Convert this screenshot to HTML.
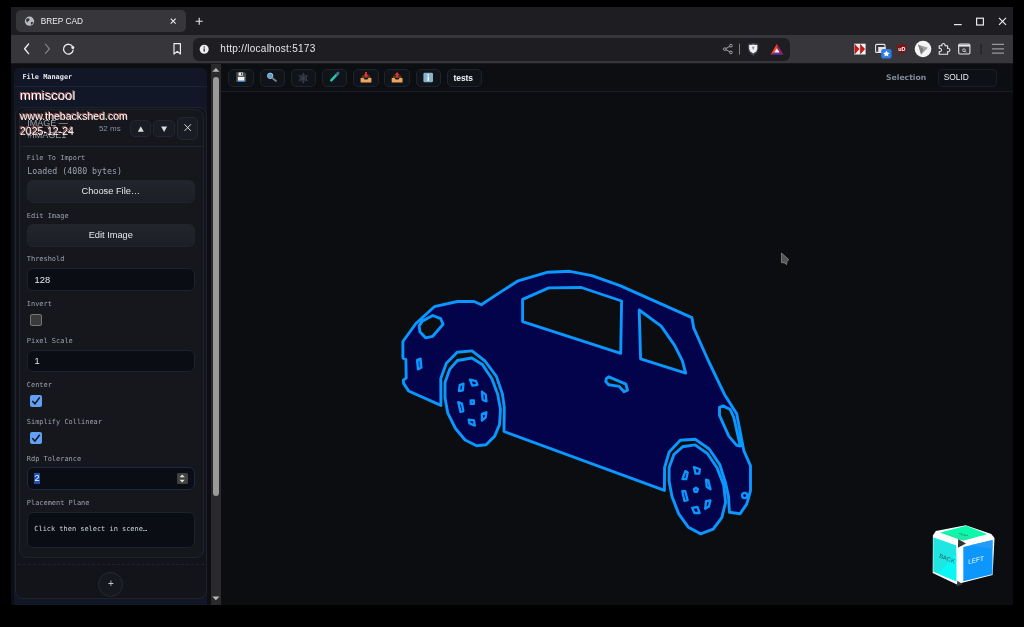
<!DOCTYPE html>
<html><head><meta charset="utf-8"><title>BREP CAD</title>
<style>
*{box-sizing:border-box;margin:0;padding:0}
html,body{width:1024px;height:627px;overflow:hidden;background:#000}
body{position:relative;font-family:"Liberation Sans","DejaVu Sans",sans-serif;color:#e5e7eb}
body div,body span,body svg{position:absolute}
#root{left:0;top:0;width:1024px;height:627px;will-change:transform}
.mono{font-family:"DejaVu Sans Mono","Liberation Mono",monospace}
.nw{white-space:nowrap}
/* browser chrome */
#win{left:11px;top:7px;width:1002px;height:598px;background:#0b0d10;overflow:hidden}
#tabbar{left:11px;top:7px;width:1002px;height:28px;background:#1e1e22}
#tab{left:15.5px;top:10px;width:170px;height:21.5px;background:#36363b;border-radius:5px}
#tabt{left:40.7px;top:15.7px;font-size:8.3px;line-height:10px;color:#ececee}
#nav{left:11px;top:35px;width:1002px;height:29px;background:#36363b;border-bottom:1.8px solid #18181b}
#url{left:193px;top:38px;width:597.2px;height:22.5px;background:#1e1e22;border-radius:6px}
#urlt{left:220.3px;top:43.2px;font-size:10px;line-height:12px;color:#e6e6e8;letter-spacing:.27px}
/* sidebar */
#side{left:11px;top:64px;width:200px;height:541px;background:#0c0e12}
#fm{left:14px;top:67.5px;width:193px;height:537.5px;background:#111726;border-radius:5px 5px 0 0}
#fmline{left:14px;top:86px;width:193px;height:1px;background:#1a2233}
#fmt{left:22.4px;top:73.2px;font-weight:bold;font-size:6.9px;line-height:8px;color:#e5e7eb}
#scroll{left:210.8px;top:64px;width:10.1px;height:541px;background:#2a2a2c}
#thumb{left:213px;top:76.7px;width:6.1px;height:419.8px;background:#9a9a9a;border-radius:3px}
/* history card */
#hc{left:15px;top:107.2px;width:192px;height:492.3px;background:#121419;border:1px solid #1d2330;border-radius:8px}
#hi{left:18.5px;top:108.5px;width:185.5px;height:449px;background:#15171c;border:1px solid #1d2330;border-radius:8px}
#hsep{left:19.5px;top:146px;width:183.5px;height:1px;background:#1d2330}
.lbl{left:26.8px;font-size:6.95px;line-height:8px;color:#9aa2b1}
.btn{left:26.8px;width:168px;height:23.2px;background:#1e2128;border:1px solid #20242c;border-radius:6px;text-align:center;font-size:9.25px;line-height:21.4px;color:#e5e7eb;background:linear-gradient(#22252c,#1b1e25)}
.inp{left:26.8px;width:168px;height:22.8px;background:#0a0d13;border:1px solid #1c2230;border-radius:6px}
.inp span{left:6.8px;top:5.4px;font-size:9.3px;line-height:10px;color:#e5e7eb}
.cb{left:29.9px;width:12.2px;height:12.2px;border-radius:2px}
.cb.off{background:#3a3a3a;border:1px solid #767676}
.cb.on{background:#62a0f5}
.hb{top:119.9px;width:21.3px;height:17.6px;background:#191c22;border:1px solid #222733;border-radius:5px}
/* main */
#main{left:220.9px;top:64px;width:792.1px;height:541px;background:#0b0d10}
#tb{left:220.9px;top:64px;width:792.1px;height:28.2px;background:#0c0e12;border-bottom:1px solid #181c24}
.tbtn{top:68.8px;width:25.4px;height:18px;border:1px solid #1c2431;background:#101318;border-radius:5px}
/* watermark */
.wm{left:20px;color:#fbfbfb;text-shadow:-1px -1.1px 0 #ad5a56;white-space:nowrap}
</style></head><body>
<div id="root">
<div id="win"></div>
<div id="tabbar"></div><div id="tab"></div><span id="tabt" class="nw">BREP CAD</span>
<div id="nav"></div><div id="url"></div><span id="urlt" class="nw">http://localhost:5173</span>
<svg style="left:11px;top:7px" width="1002" height="57" viewBox="11 7 1002 57">
<!-- globe -->
<circle cx="29.5" cy="21.2" r="4.6" fill="#b9bcc2"/><path d="M26 19.4 q1.6 -1.8 3.4 -.6 q.8 1.4 -.6 2.2 q-1.6 .2 -1.2 1.8 q-1.4 -.4 -1.6 -3.4z M31 22 q1.2 -.6 2.2 .2 q-.4 1.8 -2 2.6 q-.8 -1.4 -.2 -2.8z" fill="#36363b"/>
<!-- tab close / new tab -->
<path d="M170.7 18.7 L175.7 23.7 M175.7 18.7 L170.7 23.7" stroke="#e8e8ea" stroke-width="1.1"/>
<path d="M195.7 21.2 H202.7 M199.2 17.7 V24.7" stroke="#e8e8ea" stroke-width="1.1"/>
<!-- window controls -->
<path d="M954 24.6 H961.7" stroke="#e8e8ea" stroke-width="1.2"/>
<rect x="976.6" y="18.2" width="6.8" height="6.8" fill="none" stroke="#e8e8ea" stroke-width="1.2"/>
<path d="M999 17.8 L1006 24.8 M1006 17.8 L999 24.8" stroke="#e8e8ea" stroke-width="1.2"/>
<!-- nav -->
<path d="M28.6 44 L24.6 48.8 L28.6 53.6" fill="none" stroke="#ececee" stroke-width="1.4" stroke-linecap="round" stroke-linejoin="round"/>
<path d="M45.4 44.2 L49.4 48.8 L45.4 53.4" fill="none" stroke="#85858a" stroke-width="1.2" stroke-linecap="round" stroke-linejoin="round"/>
<path d="M72.6 46.6 A4.9 4.9 0 1 0 73.2 50.2" fill="none" stroke="#ececee" stroke-width="1.3" stroke-linecap="round"/><circle cx="72.8" cy="47.6" r="1.5" fill="#ececee"/>
<path d="M174 43.6 H180.4 V54 L177.2 51.4 L174 54 Z" fill="none" stroke="#ececee" stroke-width="1.2" stroke-linejoin="round"/>
<circle cx="204.2" cy="49.2" r="4.5" fill="#ececee"/><rect x="203.6" y="48.4" width="1.2" height="3.2" fill="#1e1e22"/><rect x="203.6" y="46.4" width="1.2" height="1.2" fill="#1e1e22"/>
<!-- share -->
<g stroke="#c2c2c6" stroke-width="0.8" fill="#1e1e22"><path d="M730.9 45.8 L724.8 49.1 L730.9 52.3" fill="none"/><circle cx="730.9" cy="45.7" r="1.35"/><circle cx="724.8" cy="49.1" r="1.35"/><circle cx="730.9" cy="52.4" r="1.35"/></g>
<path d="M739.5 43.6 V54.7" stroke="#96969b" stroke-width="0.8"/>
<!-- brave shield -->
<path d="M753.2 43.1 l2.8 .5 l1.4 -.3 l1.3 1.7 l-.4 1.3 l.3 1.5 l-1.2 4.4 l-4.2 3.7 l-4.2 -3.7 l-1.2 -4.4 l.3 -1.5 l-.4 -1.3 l1.3 -1.7 l1.4 .3 z" fill="#3c3f4d"/><path d="M753.2 44.4 l2.2 .5 l1.4 -.2 l.8 1.2 l-.5 1.2 l.3 1.1 l-1 3 l-3.2 2.3 l-3.2 -2.3 l-1 -3 l.3 -1.1 l-.5 -1.2 l.8 -1.2 l1.4 .2 z" fill="#f1f1f4"/><path d="M753.2 46.6 l1.3 .5 l-.5 1.5 l-.8 1.5 l-.8 -1.5 l-.5 -1.5 z" fill="#8d90a0"/>
<!-- BAT -->
<path d="M776.9 43.8 L783.6 54.8 L776.9 51.2 Z" fill="#9e1f63"/><path d="M776.9 43.8 L770.6 54.8 L776.9 51.2 Z" fill="#ff4a1f"/><path d="M770.6 54.8 L776.9 51.2 L783.6 54.8 Z" fill="#6a2f96"/><path d="M776.9 48.2 L779.6 52.6 H774.3 Z" fill="#fff"/>
<!-- ext 1 -->
<rect x="854" y="43.7" width="11.6" height="10.8" fill="#f4f4f4"/><path d="M854.7 44.3 L859.2 49.1 L854.7 53.9 Z M860.3 44.3 L864.8 49.1 L860.3 53.9 Z" fill="#e01010" stroke="#4a0a0a" stroke-width="0.4"/>
<!-- ext 2 -->
<rect x="875.6" y="44.4" width="9.4" height="8" rx="1" fill="none" stroke="#e4e4e6" stroke-width="1.1"/><rect x="878.2" y="47" width="7.4" height="5.6" fill="#e4e4e6"/><rect x="881.2" y="49" width="10.4" height="9.6" rx="2.2" fill="#2e7be6"/><path d="M886.4 50.6 l1 2 l2.2 .3 l-1.6 1.5 l.4 2.2 l-2 -1.1 l-2 1.1 l.4 -2.2 l-1.6 -1.5 l2.2 -.3 z" fill="#fff"/>
<!-- ublock -->
<path d="M901.8 43.8 q2.6 1.3 5.2 1.3 q.3 6.2 -5.2 9.4 q-5.5 -3.2 -5.2 -9.4 q2.6 0 5.2 -1.3z" fill="#7d1418"/><text x="901.8" y="50.9" font-size="5.4" font-weight="bold" fill="#fff" text-anchor="middle" font-family="Liberation Sans, sans-serif">uD</text>
<!-- circle play -->
<circle cx="923" cy="49" r="8.3" fill="#f5f5f5"/><path d="M918 44.5 L928 47.8 L921.2 54.6 Z" fill="#a2a2a2"/><path d="M918 44.5 L923.4 49.3 L921.2 54.6 Z" fill="#7c7c7c"/>
<!-- puzzle -->
<path d="M939.2 45.8 h2.6 a1.7 1.7 0 1 1 3.2 0 h2.6 v2.6 a1.7 1.7 0 1 1 0 3.2 v2.6 h-8.4 v-2.6 a1.7 1.7 0 1 0 0 -3.2 z" fill="none" stroke="#e6e6e8" stroke-width="1.1" stroke-linejoin="round"/>
<!-- window search -->
<rect x="958.7" y="44" width="11.2" height="10" rx="1.2" fill="none" stroke="#e6e6e8" stroke-width="1.1"/><path d="M958.7 45.6 H969.9" stroke="#e6e6e8" stroke-width="2"/><circle cx="964" cy="50.2" r="1.4" fill="none" stroke="#e6e6e8" stroke-width="0.8"/><path d="M965 51.2 L966.4 52.6" stroke="#e6e6e8" stroke-width="0.8"/>
<path d="M981.1 44 V54.6" stroke="#1d1d21" stroke-width="1"/>
<path d="M991.9 44.4 H1004 M991.9 48.8 H1004 M991.9 53.2 H1004" stroke="#98989c" stroke-width="1.3"/>
</svg>

<div id="side"></div>
<div id="fm"></div><div id="fmline"></div><span id="fmt" class="mono nw">File Manager</span>
<div id="scroll"></div><div id="thumb"></div>
<svg style="left:210px;top:64px" width="12" height="541" viewBox="210 64 12 541"><path d="M212.3 71.8 L215.9 67.9 L219.5 71.8 Z" fill="#b8b8b8"/><path d="M212.3 596.4 L215.9 600.3 L219.5 596.4 Z" fill="#b8b8b8"/></svg>

<div id="hc"></div><div id="hi"></div><div id="hsep"></div>
<span class="nw" style="left:27.2px;top:118px;font-size:9px;line-height:10px;color:#a0a5ae">IMAGE —</span>
<span class="nw" style="left:27.2px;top:129.5px;font-size:9px;line-height:10px;color:#989da7">#IMAGE1</span>
<span class="nw" style="left:98.9px;top:124px;font-size:8px;line-height:9px;color:#8790a0">52 ms</span>
<div class="hb" style="left:130.2px"></div><div class="hb" style="left:153.4px"></div>
<div class="hb" style="left:177.2px;top:116.9px;height:23px"></div>
<svg style="left:130px;top:117px" width="70" height="24" viewBox="130 117 70 24"><path d="M137.8 131.8 L140.8 126.2 L143.8 131.8Z M161.1 126.4 L164.1 132 L167.1 126.4Z" fill="#dcdcdc"/><path d="M184.5 124.3 L190.9 130.9 M190.9 124.3 L184.5 130.9" stroke="#dedede" stroke-width="1" fill="none"/></svg>
<span class="lbl mono nw" style="top:153.8px">File To Import</span>
<span class="mono nw" style="left:27.2px;top:166px;font-size:8.3px;line-height:10px;color:#9aa2b1">Loaded (4080 bytes)</span>
<div class="btn" style="top:180.2px">Choose File…</div>
<span class="lbl mono nw" style="top:211.8px">Edit Image</span>
<div class="btn" style="top:223.8px">Edit Image</div>
<span class="lbl mono nw" style="top:255px">Threshold</span>
<div class="inp" style="top:268.3px"><span>128</span></div>
<span class="lbl mono nw" style="top:299.6px">Invert</span>
<div class="cb off" style="top:313.7px"></div>
<span class="lbl mono nw" style="top:336.9px">Pixel Scale</span>
<div class="inp" style="top:349.5px"><span>1</span></div>
<span class="lbl mono nw" style="top:380.8px">Center</span>
<div class="cb on" style="top:394.6px"></div>
<span class="lbl mono nw" style="top:417.5px">Simplify Collinear</span>
<div class="cb on" style="top:431.9px"></div>
<svg style="left:29px;top:393px" width="14" height="53" viewBox="29 393 14 53"><path d="M32.3 401 L34.9 403.8 L39.8 397.4 M32.3 438.3 L34.9 441.1 L39.8 434.7" stroke="#101318" stroke-width="1.5" fill="none"/></svg>
<span class="lbl mono nw" style="top:455.3px">Rdp Tolerance</span>
<div class="inp" style="top:467.4px;border-color:#1b2a44"></div>
<div style="left:34.3px;top:472.8px;width:5.8px;height:11.4px;background:#1f4fb8"></div>
<span class="nw" style="left:34.6px;top:473.4px;font-size:9.3px;line-height:10px;color:#fff">2</span>
<div style="left:176.9px;top:472.8px;width:10.7px;height:11.4px;background:#414141;border-radius:1.5px"></div>
<svg style="left:176px;top:472px" width="13" height="13" viewBox="176 472 13 13"><path d="M179.6 477.3 L182.2 474.6 L184.8 477.3Z M179.6 479.8 L182.2 482.5 L184.8 479.8Z" fill="#e0e0e0"/></svg>
<span class="lbl mono nw" style="top:498.8px">Placement Plane</span>
<div class="inp" style="top:511.6px;height:36.8px"></div>
<span class="mono nw" style="left:34.3px;top:525px;font-size:6.95px;line-height:8px;color:#cfd5df">Click then select in scene…</span>
<div style="left:18px;top:563.5px;width:186px;height:0;border-top:1px dashed #1e232d"></div>
<div style="left:98.4px;top:572px;width:25px;height:25px;border-radius:50%;background:#15181e;border:1px solid #252a35"></div>
<span class="nw" style="left:107.4px;top:579.2px;font-size:10px;line-height:10px;color:#c4c8d0;width:7px;text-align:center">+</span>

<div id="main"></div><div id="tb"></div>
<div class="tbtn" style="left:228.4px"></div><div class="tbtn" style="left:259.5px"></div><div class="tbtn" style="left:290.5px"></div><div class="tbtn" style="left:321.8px"></div><div class="tbtn" style="left:353.2px"></div><div class="tbtn" style="left:384.3px"></div><div class="tbtn" style="left:415.5px"></div>
<div class="tbtn" style="left:447px;width:34.8px"></div>
<span class="nw" style="left:453.6px;top:72.6px;font-size:8.5px;line-height:10px;color:#f0f2f5;font-weight:bold;letter-spacing:-.1px">tests</span>
<svg style="left:228px;top:68px" width="216" height="20" viewBox="228 68 216 20">
<!-- floppy -->
<path d="M236.2 72.3 H244.6 L246.1 73.8 V81.9 H236.2 Z" fill="#4c4c4e"/><rect x="238.6" y="72.4" width="4.2" height="3.3" fill="#eef0f3"/><rect x="241" y="72.8" width="1.1" height="2.4" fill="#4c4c4e"/><rect x="237.9" y="76.9" width="6.5" height="3.9" fill="#f2f4f7"/><rect x="237.9" y="80.7" width="6.5" height="1.2" fill="#2f86d8"/>
<!-- magnifier -->
<circle cx="270.2" cy="75.8" r="2.7" fill="#5a9fd0" stroke="#a9c4d8" stroke-width="1"/><path d="M272.6 78.2 L276 81" stroke="#7a8088" stroke-width="1.8" stroke-linecap="round"/>
<!-- web -->
<g stroke="#454b57" stroke-width="0.7" fill="none"><path d="M303.3 72.6 V83.6 M298.5 75.3 L308.1 80.9 M298.5 80.9 L308.1 75.3"/><path d="M303.3 74.3 L306.5 76.2 V80 L303.3 81.9 L300.1 80 V76.2 Z M303.3 76.2 L304.9 77.1 V79 L303.3 80 L301.7 79 V77.1 Z"/></g>
<!-- test tube -->
<path d="M337.6 73.6 L331.3 80.4" stroke="#1cc9b3" stroke-width="2.4" stroke-linecap="round"/><path d="M338.2 73 L336.9 74.4" stroke="#3f6f92" stroke-width="2.6" stroke-linecap="round"/>
<!-- inbox down -->
<path d="M360.6 78 h3 l1 1.6 h2.8 l1 -1.6 h3 v4.4 h-10.8 Z" fill="#eba55c"/><path d="M361.2 78 L362.4 75.4 H369.6 L370.8 78" fill="#5e3c24"/><path d="M365 72 h2 v2.4 h1.6 l-2.6 3 l-2.6 -3 h1.6 Z" fill="#e23030"/>
<!-- outbox up -->
<path d="M391.7 78 h3 l1 1.6 h2.8 l1 -1.6 h3 v4.4 h-10.8 Z" fill="#eba55c"/><path d="M392.3 78 L393.5 75.4 H400.7 L401.9 78" fill="#5e3c24"/><path d="M396.1 77.6 h2 v-2.6 h1.6 l-2.6 -3 l-2.6 3 h1.6 Z" fill="#e23030"/>
<!-- info -->
<rect x="423.4" y="72.7" width="9.6" height="9.6" rx="1.4" fill="#86b3cd"/><rect x="427.5" y="76.6" width="1.5" height="4.2" fill="#fff"/><rect x="427.5" y="74.2" width="1.5" height="1.5" fill="#fff"/>
</svg>
<span class="nw" style="left:886px;top:72.8px;font-size:7.7px;line-height:10px;color:#828b9a;font-weight:bold;font-family:'DejaVu Sans','Liberation Sans',sans-serif;letter-spacing:0px">Selection</span>
<div style="left:938px;top:69px;width:58.5px;height:17.7px;background:#0d1015;border:1px solid #1a1f28;border-radius:4px"></div>
<span class="nw" style="left:943.7px;top:72.4px;font-size:8.4px;line-height:10px;color:#e8ebef">SOLID</span>

<svg style="left:0;top:0" width="1024" height="627" viewBox="0 0 1024 627">
<g fill="#03034b" stroke="#0a97ff" stroke-width="2.9" stroke-linejoin="round" fill-rule="evenodd">
<!-- body with holes -->
<path d="M403.6 383.4 L408.6 391 L440.9 405.4 L440.8 378.6 L446.4 363.2 L457.2 352.2 L472 350.9 L485 361 L496.4 376.4 L502.4 394 L504.3 407.4 L504 431.5 L664.4 490.4 L664.6 467.5 L669.2 452 L680.2 440.2 L695.2 439.2 L709.2 449 L719.8 464.6 L725.6 483.2 L728.5 496.6 L729.4 512.2 L740 513.8 L746.7 504.2 L750.5 490.8 L750.5 465.9 L743.8 450.6 L739 425.7 L736.7 413.8 L724.5 394.4 L708 360 L693.8 328.2 L691.9 317.6 L620 285.6 L591.9 275.7 L569.9 271.3 L547.8 272.2 L518.2 280.8 L500 292.4 L481.3 304.7 L474.2 301.5 L457.4 301.5 L434.3 306.7 L415.9 323.5 L402.9 341.5 L402.9 358 L405.9 359.6 L406.2 378.1 L403.3 380.2 Z
M522.6 299.4 L548.8 287.9 L581.3 287.5 L621.6 301 L620.7 353.4 L522.6 321.6 Z
M639.2 310 L661.2 326.2 L674.6 345.4 L682.3 360.7 L685.7 373.1 L640.6 358.8 Z
M606.4 378.7 L608.7 376.8 L625.9 384.1 L627.5 390.2 L624 391.7 L619.2 386.4 L608.7 384.8 L605.8 381.6 Z
M422.3 321.1 L432.7 315.5 L440.7 318.7 L443.1 324.3 L432.7 336.3 L425.5 337.8 L419.9 331.8 L419.1 325.9 Z
M719.5 407.4 L723.1 405.9 L730.2 409.5 L733.8 417.4 L740.3 446.1 L736.7 445.4 L728.8 436.1 L719.5 415.3 Z"/>
<!-- wheels -->
<path d="M457.4 360.5 L471.8 358 L482.3 364.4 L491.9 378.7 L497.6 394 L500.5 409.3 L499.5 424.6 L494.7 436.1 L486.1 444.7 L476.6 445.7 L465.1 440 L455.5 428.5 L447.8 413.2 L445 397.8 L445 382.5 L449.8 369.1 Z"/>
<path d="M669.1 467.8 L673.9 454.5 L682.5 446.8 L695 444.9 L707.4 453.5 L717 467.8 L723.7 485.1 L725.6 502.3 L721.8 517.6 L713.2 529.1 L700.7 533.9 L688.3 527.2 L678.7 513.8 L672 496.6 L669.1 481.2 Z"/>
</g>
<g fill="#03034b" stroke="#0a97ff" stroke-width="2.3" stroke-linejoin="round">
<path d="M417 360 L420.6 358.6 L421.4 367.6 L418 369.4 Z" fill="#0a49a8"/>
<circle cx="744.7" cy="495.6" r="2.6"/>
<!-- front hub -->
<path d="M470.0 379.6 L476.0 381.1 L477.5 384.8 L472.3 385.6 Z"/>
<path d="M459.7 385.1 L463.5 383.6 L462.8 390.3 L459.0 391.1 Z"/>
<path d="M481.9 391.7 L485.7 394.6 L486.5 401.3 L482.7 399.9 Z"/>
<path d="M458.2 402.1 L461.9 403.6 L463.4 411.1 L460.5 411.9 Z"/>
<path d="M481.9 413.8 L486.4 412.3 L485.6 417.5 L481.9 420.5 Z"/>
<path d="M468.7 419.6 L474.0 420.4 L474.8 425.6 L469.5 423.4 Z"/>
<path d="M470.7 400.5 L473.9 400.5 L473.9 403.9 L470.7 403.9 Z"/>
<!-- rear hub -->
<path d="M694.0 467.0 L699.9 469.3 L699.2 473.7 L695.5 473.7 Z"/>
<path d="M685.4 471.1 L687.7 472.5 L686.2 479.2 L682.4 479.2 Z"/>
<path d="M706.0 479.7 L708.3 480.4 L710.5 489.3 L706.8 487.1 Z"/>
<path d="M682.3 491.2 L685.3 491.2 L687.6 500.1 L684.5 500.9 Z"/>
<path d="M706.0 501.2 L710.4 500.5 L708.9 506.5 L705.2 508.7 Z"/>
<path d="M692.2 507.8 L697.4 507.0 L699.6 513.0 L694.4 513.0 Z"/>
<path d="M695.9 487.8 L697.9 489.2 L697.1 491.8 L694.7 491.8 L693.9 489.2 Z"/>
</g>
<!-- cursor -->
<path d="M781.5 253 L788.9 259.7 L787 261.3 L786.6 264.5 L784.4 262.9 L781.4 262.6 Z" fill="#555" stroke="#a8a8a8" stroke-width="0.6"/>
</svg>

<svg style="left:925px;top:515px" width="80" height="80" viewBox="925 515 80 80">
<path d="M935.8 531 L965.8 525.2 L991.3 534.1 L994.5 538 L992.6 575 L963.3 582.6 L956.9 584.5 L932.7 573.1 L932.9 535.4 Z" fill="#fff"/>
<path d="M940.3 532.4 L966.2 525.8 L987.3 534.3 L963.4 540.5 L958.2 539 Z" fill="#0cf9ab"/><path d="M940.3 532.4 L958.2 539 L963.4 540.5 L975 537.4 Z" fill="#22e6a4" opacity=".8"/>
<path d="M933.3 537.3 L956.3 545.6 L956.3 581.3 L933.3 571.8 Z" fill="#1fe6e2"/>
<path d="M956.3 553 L956.3 581.3 L938 573.8 Z" fill="#06fbfb" opacity=".8"/>
<path d="M963.3 546.9 L992.6 539.9 L992.4 574.3 L963.3 581.3 Z" fill="#0d97fd"/>
<path d="M970 545.3 L992.6 539.9 L992.5 549 Z" fill="#2a9cf2" opacity=".8"/>
<path d="M958.2 539 L966 543.6 L957.9 547.8 Z" fill="#343434"/>
<path d="M957.1 580.8 L962.6 584 L957.1 586.4 Z" fill="#3a3a3a"/>
<text transform="matrix(0.92 0.38 0 1 939.2 557.4)" font-size="6.2" fill="#2a5c5e" font-family="Liberation Sans, sans-serif" font-style="italic">BACK</text>
<text transform="matrix(0.97 -0.24 0 1 968.2 564.3)" font-size="6.6" fill="#f4f8ff" font-family="Liberation Sans, sans-serif">LEFT</text>
<text transform="matrix(0.92 0.3 -0.75 0.28 957.6 533.6)" font-size="4.6" font-weight="bold" fill="#2f6a58" font-family="Liberation Sans, sans-serif">TOP</text>
</svg>

<span class="wm" style="top:88px;font-size:13.1px;line-height:15px">mmiscool</span>
<span class="wm" style="top:109.5px;font-size:10.55px;line-height:13px">www.thebackshed.com</span>
<span class="wm" style="top:124.5px;font-size:10.55px;line-height:13px">2025-12-24</span>

</div>
</body></html>
